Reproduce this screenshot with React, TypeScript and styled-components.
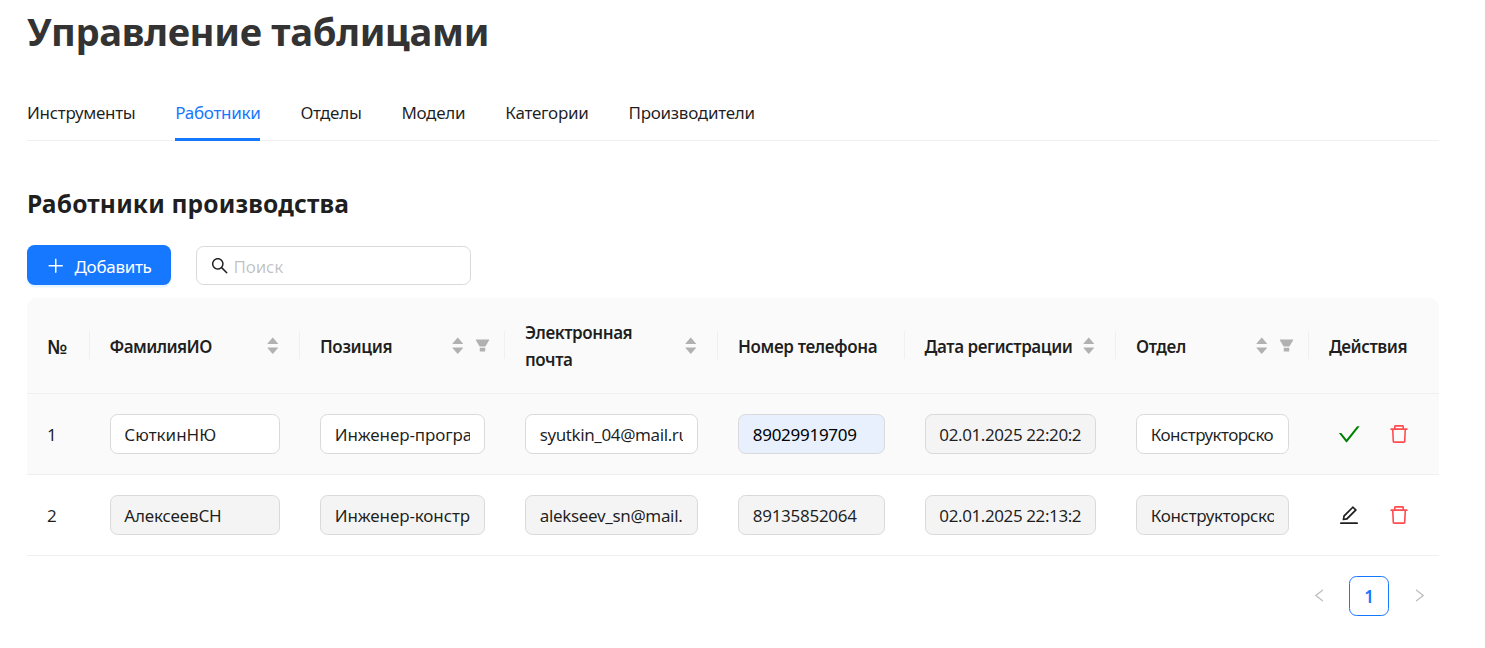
import React from 'react';
import styled, { createGlobalStyle, css } from 'styled-components';
import {
  AiOutlinePlus,
  AiOutlineSearch,
  AiFillCaretUp,
  AiFillCaretDown,
  AiFillFilter,
  AiOutlineCheck,
  AiOutlineDelete,
  AiOutlineEdit,
  AiOutlineLeft,
  AiOutlineRight,
} from 'react-icons/ai';

const ICON_BOX = '64 64 896 896';

const GlobalStyle = createGlobalStyle`
  *, *::before, *::after { box-sizing: border-box; }
  body {
    margin: 0;
    background: #fff;
    color: rgba(0, 0, 0, 0.88);
    font-family: 'Noto Sans', 'Open Sans', sans-serif;
    font-size: 17px;
    line-height: 27.5px;
    letter-spacing: -0.3px;
  }
  svg { display: block; flex: none; }
`;

const Page = styled.main`
  display: flex;
  flex-direction: column;
  width: 1439px;
  height: 648px;
  padding: 1px 0 0 27px;
  overflow: hidden;
`;

const Title = styled.h1`
  margin: 0;
  height: 60px;
  font-size: 38.2px;
  line-height: 60px;
  font-weight: 700;
  letter-spacing: -0.33px;
  color: #333;
`;

const Tabs = styled.nav`
  display: flex;
  gap: 40px;
  height: 56px;
  margin-top: 24px;
  padding-top: 13px;
  border-bottom: 1px solid #f0f0f0;
`;

const Tab = styled.a<{ $width: number; $spacing: number; $active?: boolean }>`
  width: ${(p) => p.$width}px;
  height: 43px;
  padding-top: 1px;
  white-space: nowrap;
  letter-spacing: ${(p) => p.$spacing}px;
  ${(p) =>
    p.$active &&
    css`
      color: #1677ff;
      border-bottom: 3px solid #1677ff;
    `}
`;

const SectionTitle = styled.h3`
  margin: 47px 0 0;
  height: 32px;
  font-size: 24.6px;
  line-height: 32px;
  font-weight: 700;
  letter-spacing: 0.14px;
`;

const Toolbar = styled.div`
  display: flex;
  align-items: flex-end;
  gap: 25px;
  height: 40px;
  margin-top: 25px;
`;

const AddButton = styled.button`
  display: flex;
  align-items: center;
  gap: 10px;
  width: 144px;
  height: 40px;
  padding: 3px 0 0 20px;
  border: 0;
  border-radius: 7.5px;
  background: #1677ff;
  box-shadow: 0 2.5px 0 rgba(5, 145, 255, 0.1);
  color: #fff;
  font: inherit;
  letter-spacing: -0.3px;
  white-space: nowrap;

  svg { margin-top: -1.5px; }
`;

const Search = styled.label`
  display: flex;
  align-items: center;
  gap: 5px;
  width: 275px;
  height: 39px;
  padding-left: 14px;
  border: 1px solid #d9d9d9;
  border-radius: 7.5px;
`;

const Placeholder = styled.span`
  padding-top: 2px;
  color: rgba(0, 0, 0, 0.25);
  letter-spacing: -0.2px;
`;

const Table = styled.section`
  margin-top: 13px;
`;

const columns = css`
  display: grid;
  grid-template-columns: 62.6px 210.4px 205px 213px 186.6px 211.4px 193px 130px;
  align-items: center;
  border-bottom: 1px solid #f0f0f0;
`;

const HeadRow = styled.div`
  ${columns}
  height: 96px;
  background: #fafafa;
  border-radius: 10px 10px 0 0;
  font-weight: 600;
`;

const HeadCell = styled.div<{ $spacing: number; $last?: boolean }>`
  display: flex;
  align-items: center;
  justify-content: space-between;
  height: 28px;
  margin-bottom: 1px;
  padding: 0 ${(p) => (p.$last ? 0 : 20)}px 0 20px;
  letter-spacing: ${(p) => p.$spacing}px;
  border-right: ${(p) => (p.$last ? 0 : 1)}px solid #f0f0f0;
`;

const HeadLabel = styled.span<{ $width?: number; $size?: number }>`
  padding-top: ${(p) => (p.$width ? 1 : 3)}px;
  line-height: 27px;
  font-size: ${(p) => p.$size ?? 17}px;
  white-space: ${(p) => (p.$width ? 'normal' : 'nowrap')};
  ${(p) => p.$width && `width: ${p.$width}px;`}
`;

const HeadIcons = styled.span<{ $filter?: boolean }>`
  display: flex;
  align-items: center;
  gap: 9.5px;
  margin-right: ${(p) => (p.$filter ? -6 : -2)}px;
  color: rgba(0, 0, 0, 0.29);
`;

const Sorter = styled.span`
  display: flex;
  flex-direction: column;
  padding-top: 1.2px;

  svg + svg { margin-top: -5.5px; }
`;

const Row = styled.div<{ $hover?: boolean }>`
  ${columns}
  height: 81px;
  background: ${(p) => (p.$hover ? '#fafafa' : '#fff')};
`;

const Cell = styled.div`
  padding: 0 20px;
`;

const IdCell = styled(Cell)`
  padding-top: 2px;
`;

type FieldKind = 'edit' | 'disabled' | 'autofill';

const fieldBackground: Record<FieldKind, string> = {
  edit: '#fff',
  disabled: '#f4f4f4',
  autofill: '#e8f0fe',
};

const Field = styled.div<{ $kind: FieldKind; $spacing: number }>`
  height: 40px;
  padding: 6px 13.75px 0;
  border: 1px solid #d9d9d9;
  border-radius: 7.5px;
  background: ${(p) => fieldBackground[p.$kind]};
  color: ${(p) => (p.$kind === 'autofill' ? '#000' : 'inherit')};
  letter-spacing: ${(p) => p.$spacing}px;
`;

const FieldValue = styled.div`
  overflow: hidden;
  white-space: nowrap;
`;

const Actions = styled.div`
  display: flex;
  align-items: center;
  gap: 27.5px;
  padding-left: 28.75px;
`;

const Action = styled.span`
  display: flex;
  justify-content: center;
  width: 22.5px;
`;

const Pagination = styled.div`
  display: flex;
  align-items: center;
  justify-content: flex-end;
  gap: 22.5px;
  margin-top: 20px;
  padding-right: 12.5px;
  color: rgba(0, 0, 0, 0.25);

  svg { margin-top: -1px; }
`;

const PageNumber = styled.span`
  display: flex;
  align-items: center;
  justify-content: center;
  width: 40px;
  height: 40px;
  padding-top: 2px;
  border: 1px solid #1677ff;
  border-radius: 7.5px;
  color: #1677ff;
  font-weight: 600;
`;

const tabs = [
  { label: 'Инструменты', width: 108.2, spacing: -0.3 },
  { label: 'Работники', width: 85.2, spacing: -0.28, active: true },
  { label: 'Отделы', width: 61, spacing: -0.25 },
  { label: 'Модели', width: 63.8, spacing: -0.3 },
  { label: 'Категории', width: 83.3, spacing: -0.25 },
  { label: 'Производители', width: 126, spacing: -0.27 },
];

const headers: {
  label: string;
  spacing: number;
  size?: number;
  sort?: boolean;
  filter?: boolean;
  wrapAt?: number;
}[] = [
  { label: '№', spacing: 0, size: 19.5 },
  { label: 'ФамилияИО', spacing: -0.59, sort: true },
  { label: 'Позиция', spacing: -0.38, sort: true, filter: true },
  { label: 'Электронная почта', spacing: -0.43, sort: true, wrapAt: 120 },
  { label: 'Номер телефона', spacing: -0.36 },
  { label: 'Дата регистрации', spacing: -0.45, sort: true },
  { label: 'Отдел', spacing: -0.25, sort: true, filter: true },
  { label: 'Действия', spacing: -0.48 },
];

type FieldData = [value: string, kind: FieldKind, spacing: number];

const rows: { id: number; editing?: boolean; fields: FieldData[] }[] = [
  {
    id: 1,
    editing: true,
    fields: [
      ['СюткинНЮ', 'edit', 0],
      ['Инженер-програ', 'edit', -0.1],
      ['syutkin_04@mail.ru', 'edit', -0.4],
      ['89029919709', 'autofill', -0.27],
      ['02.01.2025 22:20:2', 'disabled', -0.4],
      ['Конструкторско', 'edit', -0.54],
    ],
  },
  {
    id: 2,
    fields: [
      ['АлексеевСН', 'disabled', -0.17],
      ['Инженер-констр', 'disabled', -0.1],
      ['alekseev_sn@mail.', 'disabled', -0.34],
      ['89135852064', 'disabled', -0.27],
      ['02.01.2025 22:13:2', 'disabled', -0.4],
      ['Конструкторско', 'disabled', -0.32],
    ],
  },
];

export default function App() {
  return (
    <Page>
      <GlobalStyle />
      <Title>Управление таблицами</Title>
      <Tabs>
        {tabs.map((t) => (
          <Tab key={t.label} $width={t.width} $spacing={t.spacing} $active={t.active}>
            {t.label}
          </Tab>
        ))}
      </Tabs>
      <SectionTitle>Работники производства</SectionTitle>
      <Toolbar>
        <AddButton>
          <AiOutlinePlus viewBox={ICON_BOX} size={17.5} />
          Добавить
        </AddButton>
        <Search>
          <AiOutlineSearch viewBox={ICON_BOX} size={17.5} />
          <Placeholder>Поиск</Placeholder>
        </Search>
      </Toolbar>
      <Table>
        <HeadRow>
          {headers.map((h, i) => (
            <HeadCell key={h.label} $spacing={h.spacing} $last={i === headers.length - 1}>
              <HeadLabel $width={h.wrapAt} $size={h.size}>
                {h.label}
              </HeadLabel>
              {h.sort && (
                <HeadIcons $filter={h.filter}>
                  <Sorter>
                    <AiFillCaretUp viewBox="0 0 1024 1024" size={15.5} />
                    <AiFillCaretDown viewBox="0 0 1024 1024" size={15.5} />
                  </Sorter>
                  {h.filter && <AiFillFilter viewBox={ICON_BOX} size={15} />}
                </HeadIcons>
              )}
            </HeadCell>
          ))}
        </HeadRow>
        {rows.map((row) => (
          <Row key={row.id} $hover={row.editing}>
            <IdCell>{row.id}</IdCell>
            {row.fields.map(([value, kind, spacing], i) => (
              <Cell key={i}>
                <Field $kind={kind} $spacing={spacing}>
                  <FieldValue>{value}</FieldValue>
                </Field>
              </Cell>
            ))}
            <Actions>
              <Action>
                {row.editing ? (
                  <AiOutlineCheck viewBox={ICON_BOX} size={22.5} color="#008000" />
                ) : (
                  <AiOutlineEdit viewBox={ICON_BOX} size={20} />
                )}
              </Action>
              <Action>
                <AiOutlineDelete viewBox={ICON_BOX} size={20} color="#ff4d4f" />
              </Action>
            </Actions>
          </Row>
        ))}
      </Table>
      <Pagination>
        <AiOutlineLeft viewBox={ICON_BOX} size={15} />
        <PageNumber>1</PageNumber>
        <AiOutlineRight viewBox={ICON_BOX} size={15} />
      </Pagination>
    </Page>
  );
}
